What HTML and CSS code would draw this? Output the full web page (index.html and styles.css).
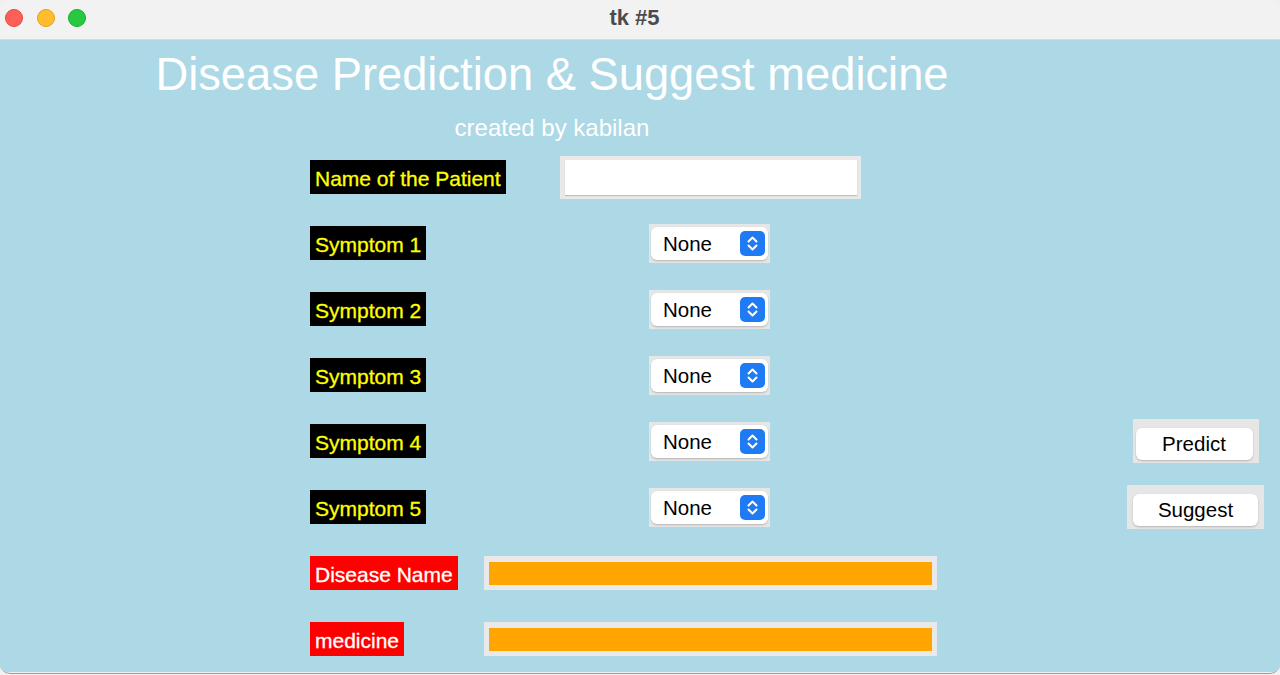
FILE: index.html
```html
<!DOCTYPE html>
<html>
<head>
<meta charset="utf-8">
<title>tk #5</title>
<link rel="stylesheet" href="styles.css">
</head>
<body>
<div class="window">
  <div class="titlebar">
    <div class="lights">
      <span class="light red"></span>
      <span class="light yellow"></span>
      <span class="light green"></span>
    </div>
    <div class="wtitle">tk #5</div>
    <div></div>
  </div>
  <div class="content">
    <div class="header">
      <h1 class="title">Disease Prediction &amp; Suggest medicine</h1>
      <p class="subtitle">created by kabilan</p>
    </div>
    <div class="form">
      <div class="lbl yellow-lbl">Name of the Patient</div>
      <div class="cell center"><div class="entry-frame"><div class="entry"></div></div></div>
      <div></div><div></div>

      <div class="lbl yellow-lbl">Symptom 1</div>
      <div class="cell center"><div class="menu-frame"><div class="menu"><span class="menu-text">None</span><span class="stepper"><svg width="25" height="25" viewBox="0 0 25 25"><path d="M8.5 10.5 L12.5 6.5 L16.5 10.5 M8.5 14.5 L12.5 18.5 L16.5 14.5" fill="none" stroke="#fff" stroke-width="2" stroke-linecap="round" stroke-linejoin="round"/></svg></span></div></div></div>
      <div></div><div></div>

      <div class="lbl yellow-lbl">Symptom 2</div>
      <div class="cell center"><div class="menu-frame"><div class="menu"><span class="menu-text">None</span><span class="stepper"><svg width="25" height="25" viewBox="0 0 25 25"><path d="M8.5 10.5 L12.5 6.5 L16.5 10.5 M8.5 14.5 L12.5 18.5 L16.5 14.5" fill="none" stroke="#fff" stroke-width="2" stroke-linecap="round" stroke-linejoin="round"/></svg></span></div></div></div>
      <div></div><div></div>

      <div class="lbl yellow-lbl">Symptom 3</div>
      <div class="cell center"><div class="menu-frame"><div class="menu"><span class="menu-text">None</span><span class="stepper"><svg width="25" height="25" viewBox="0 0 25 25"><path d="M8.5 10.5 L12.5 6.5 L16.5 10.5 M8.5 14.5 L12.5 18.5 L16.5 14.5" fill="none" stroke="#fff" stroke-width="2" stroke-linecap="round" stroke-linejoin="round"/></svg></span></div></div></div>
      <div></div><div></div>

      <div class="lbl yellow-lbl">Symptom 4</div>
      <div class="cell center"><div class="menu-frame"><div class="menu"><span class="menu-text">None</span><span class="stepper"><svg width="25" height="25" viewBox="0 0 25 25"><path d="M8.5 10.5 L12.5 6.5 L16.5 10.5 M8.5 14.5 L12.5 18.5 L16.5 14.5" fill="none" stroke="#fff" stroke-width="2" stroke-linecap="round" stroke-linejoin="round"/></svg></span></div></div></div>
      <div></div>
      <div class="cell center"><div class="btn-frame predict-frame"><div class="btn">Predict</div></div></div>

      <div class="lbl yellow-lbl">Symptom 5</div>
      <div class="cell center"><div class="menu-frame"><div class="menu"><span class="menu-text">None</span><span class="stepper"><svg width="25" height="25" viewBox="0 0 25 25"><path d="M8.5 10.5 L12.5 6.5 L16.5 10.5 M8.5 14.5 L12.5 18.5 L16.5 14.5" fill="none" stroke="#fff" stroke-width="2" stroke-linecap="round" stroke-linejoin="round"/></svg></span></div></div></div>
      <div></div>
      <div class="cell center"><div class="btn-frame suggest-frame"><div class="btn">Suggest</div></div></div>

      <div class="lbl red-lbl">Disease Name</div>
      <div class="cell"><div class="out-frame"><div class="out"></div></div></div>
      <div></div><div></div>

      <div class="lbl red-lbl">medicine</div>
      <div class="cell"><div class="out-frame"><div class="out"></div></div></div>
      <div></div><div></div>
    </div>
  </div>
</div>
</body>
</html>
```
FILE: styles.css
```css
html, body {
  margin: 0;
  padding: 0;
}
body {
  background: #f0f0f0;
  font-family: "Liberation Sans", Arial, sans-serif;
  width: 1280px;
  height: 675px;
  overflow: hidden;
}
.window {
  width: 1280px;
  height: 673px;
  border-radius: 10px;
  overflow: hidden;
  border-bottom: 1px solid #939fa4;
}
.titlebar {
  background: #f2f2f2;
  border-bottom: 1px solid #dadada;
  display: grid;
  grid-template-columns: 1fr auto 1fr;
  align-items: center;
  padding-right: 11px;
  padding-bottom: 5px;
  box-sizing: border-box;
  height: 40px;
}
.lights {
  display: flex;
  gap: 13.5px;
  padding-left: 5px;
  padding-top: 1px;
}
.light {
  width: 18px;
  height: 18px;
  border-radius: 50%;
  box-sizing: border-box;
}
.light.red { background: #fe5f57; border: 1px solid #e2463f; }
.light.yellow { background: #febc2e; border: 1px solid #e1a116; }
.light.green { background: #28c840; border: 1px solid #14ae28; }
.wtitle {
  font-weight: bold;
  font-size: 22px;
  color: #4b4b4b;
  padding-top: 1px;
}
.content {
  background: #add8e6;
  height: 632px;
  padding-top: 9px;
  box-sizing: border-box;
}
.header {
  margin-left: 155px;
  width: 794px;
  text-align: center;
  color: #ffffff;
}
.title {
  margin: 0;
  font-weight: normal;
  font-size: 45.3px;
  line-height: 52px;
  white-space: nowrap;
}
.subtitle {
  margin: 13px 0 0 0;
  font-size: 24px;
  line-height: 28px;
  white-space: nowrap;
}
.form {
  margin-top: 2px;
  margin-left: 310px;
  display: grid;
  grid-template-columns: 174px 453px 190px 137px;
  grid-auto-rows: 66px;
  align-items: center;
}
.lbl {
  justify-self: start;
  white-space: nowrap;
  font-size: 21px;
  line-height: 30px;
  height: 34px;
  padding: 4px 5px 0 5px;
  box-sizing: border-box;
  -webkit-text-stroke: 0.3px currentColor;
}
.yellow-lbl {
  background: #000000;
  color: #ffff00;
}
.red-lbl {
  background: #ff0000;
  color: #ffffff;
}
.cell {
  display: flex;
  align-items: center;
}
.cell.center {
  justify-content: center;
}
.entry-frame {
  background: #e9e9e9;
  padding: 4px 4px 4px 5px;
}
.entry {
  width: 292px;
  height: 35px;
  background: #ffffff;
  box-shadow: 0 1px 1px rgba(0,0,0,0.18);
}
.menu-frame {
  background: #e4e6e8;
  padding: 3px 2px 3px 2px;
  margin-left: -2px;
}
.menu {
  width: 117px;
  height: 33px;
  background: #ffffff;
  border-radius: 6px;
  box-shadow: 0 1px 2px rgba(0,0,0,0.22);
  display: flex;
  align-items: center;
  justify-content: space-between;
  padding: 1px 3px 0 12px;
  box-sizing: border-box;
}
.menu-text {
  font-size: 20.5px;
  color: #000;
}
.stepper {
  width: 25px;
  height: 25px;
  border-radius: 5px;
  background: #1f7bf3;
  display: flex;
}
.btn-frame {
  background: #e6e6e6;
  padding: 9px 6px 3px 6px;
}
.predict-frame {
  padding-left: 3px;
}
.btn {
  height: 32px;
  background: #ffffff;
  border-radius: 6px;
  box-shadow: 0 1px 2px rgba(0,0,0,0.22);
  font-size: 20.5px;
  line-height: 32px;
  text-align: center;
  color: #000;
}
.predict-frame .btn { width: 117px; }
.suggest-frame .btn { width: 125px; }
.out-frame {
  background: #e9e9e9;
  padding: 6px 5px 5px 5px;
  width: 453px;
  box-sizing: border-box;
}
.out {
  height: 23px;
  background: #ffa500;
}
```
